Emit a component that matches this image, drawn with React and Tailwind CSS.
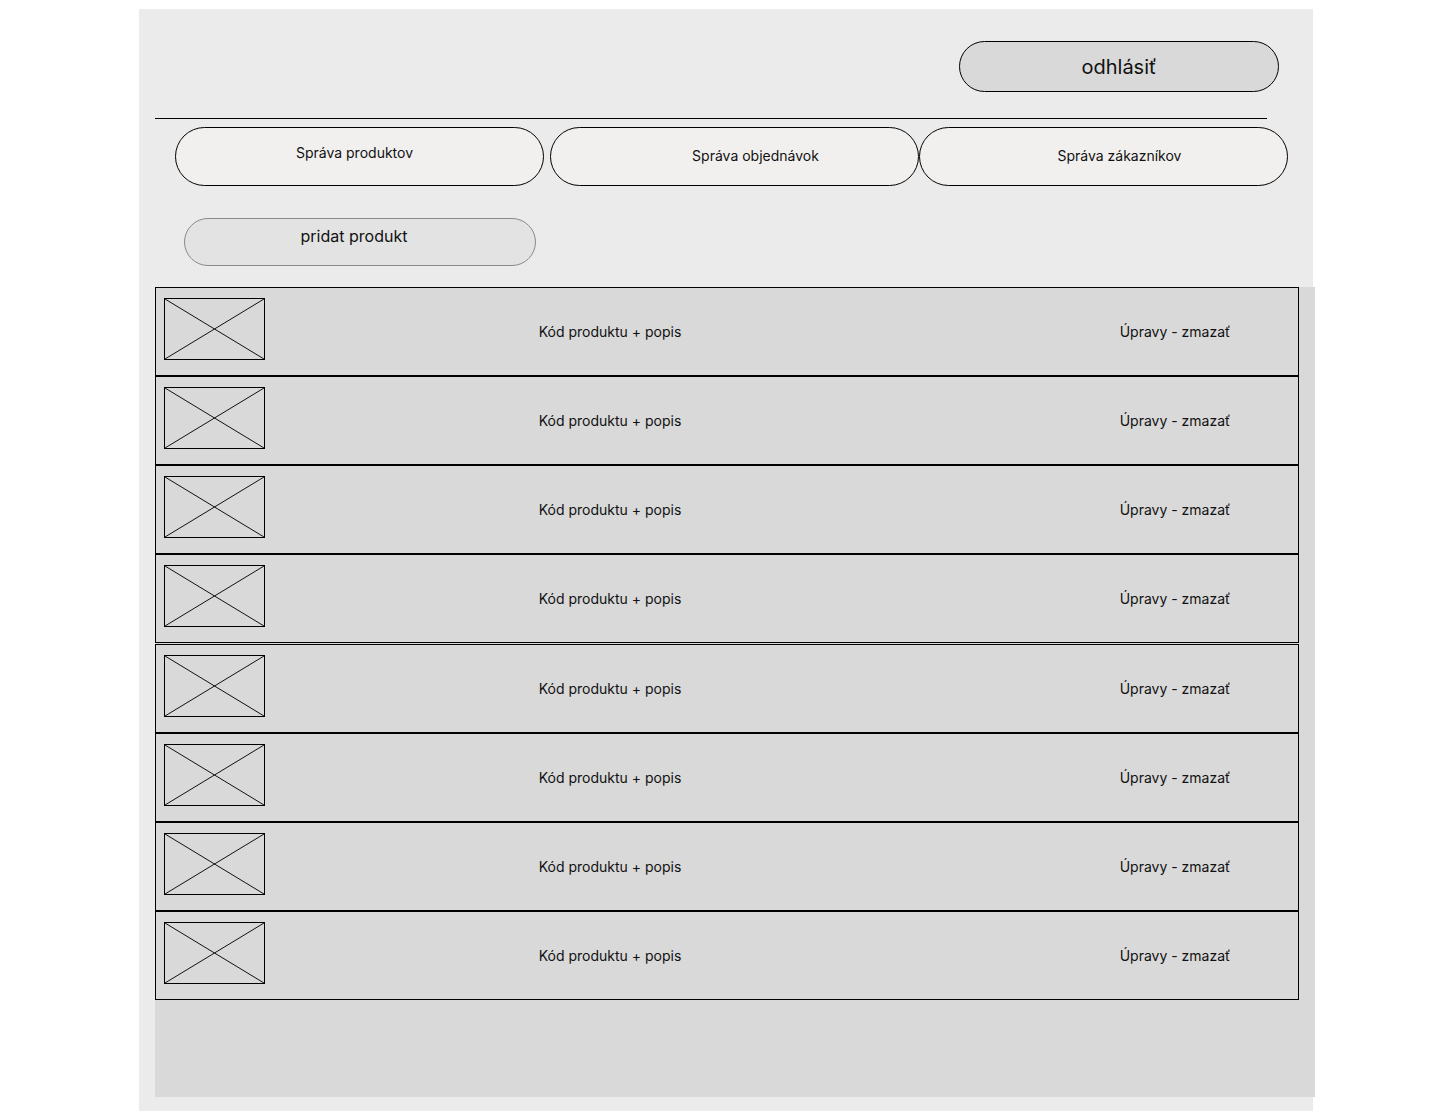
import React from "react";

function Placeholder() {
  return (
    <div className="mt-[10px] ml-[8px] h-[62px] w-[101px] shrink-0 border border-black">
      <svg width="99" height="60" viewBox="0 0 99 60" className="block">
        <line x1="0" y1="0" x2="99" y2="60" stroke="#111" strokeWidth="1" />
        <line x1="99" y1="0" x2="0" y2="60" stroke="#111" strokeWidth="1" />
      </svg>
    </div>
  );
}

function Row({ extraTop }) {
  return (
    <div className={`flex h-[89px] w-[1144px] items-start border border-black ${extraTop ? "mt-px" : ""}`}>
      <Placeholder />
      <div className="ml-[195px] flex h-full w-[300px] items-center justify-center text-[14px] text-[#111]">
        Kód produktu + popis
      </div>
      <div className="ml-[315px] flex h-full w-[200px] items-center justify-center text-[14px] text-[#111]">
        Úpravy - zmazať
      </div>
    </div>
  );
}

export default function App() {
  return (
    <div className="min-h-[1112px] w-[1440px] bg-white pt-[9px] pl-[139px]" style={{ fontFamily: "Inter, 'Noto Sans', sans-serif" }}>
      <div className="h-[1102px] w-[1174px] bg-[#ebebeb] pt-[32px]">
        <div className="flex justify-end pr-[34px]">
          <button className="flex h-[51px] w-[320px] items-center justify-center rounded-full border border-black bg-[#d9d9d9] pt-[1px] text-[20px] text-[#111]">
            odhlásiť
          </button>
        </div>
        <div className="ml-[16px] mt-[26px] h-px w-[1112px] bg-black" />
        <div className="ml-[36px] mt-[8px] flex">
          <button className="flex h-[59px] w-[369px] items-start justify-center rounded-full border border-black bg-[#f2f0ef] pt-[14px] pr-[10px] text-[14px] text-[#111]">
            Správa produktov
          </button>
          <button className="ml-[6px] flex h-[59px] w-[369px] items-start justify-center rounded-full border border-black bg-[#f2f0ef] pt-[17px] pl-[42px] text-[14px] text-[#111]">
            Správa objednávok
          </button>
          <button className="flex h-[59px] w-[369px] items-start justify-center rounded-full border border-black bg-[#f2f0ef] pt-[17px] pl-[32px] text-[14px] text-[#111]">
            Správa zákazníkov
          </button>
        </div>
        <div className="ml-[45px] mt-[32px]">
          <button className="flex h-[48px] w-[352px] items-start justify-center rounded-full border border-[#8a8a8a] bg-[#e3e3e3] pt-[5px] pr-[12px] text-[16px] text-[#111]">
            pridat produkt
          </button>
        </div>
        <div className="ml-[16px] mt-[21px] h-[810px] w-[1160px] bg-[#d9d9d9]">
          <Row />
          <Row />
          <Row />
          <Row />
          <Row extraTop />
          <Row />
          <Row />
          <Row />
        </div>
      </div>
    </div>
  );
}
